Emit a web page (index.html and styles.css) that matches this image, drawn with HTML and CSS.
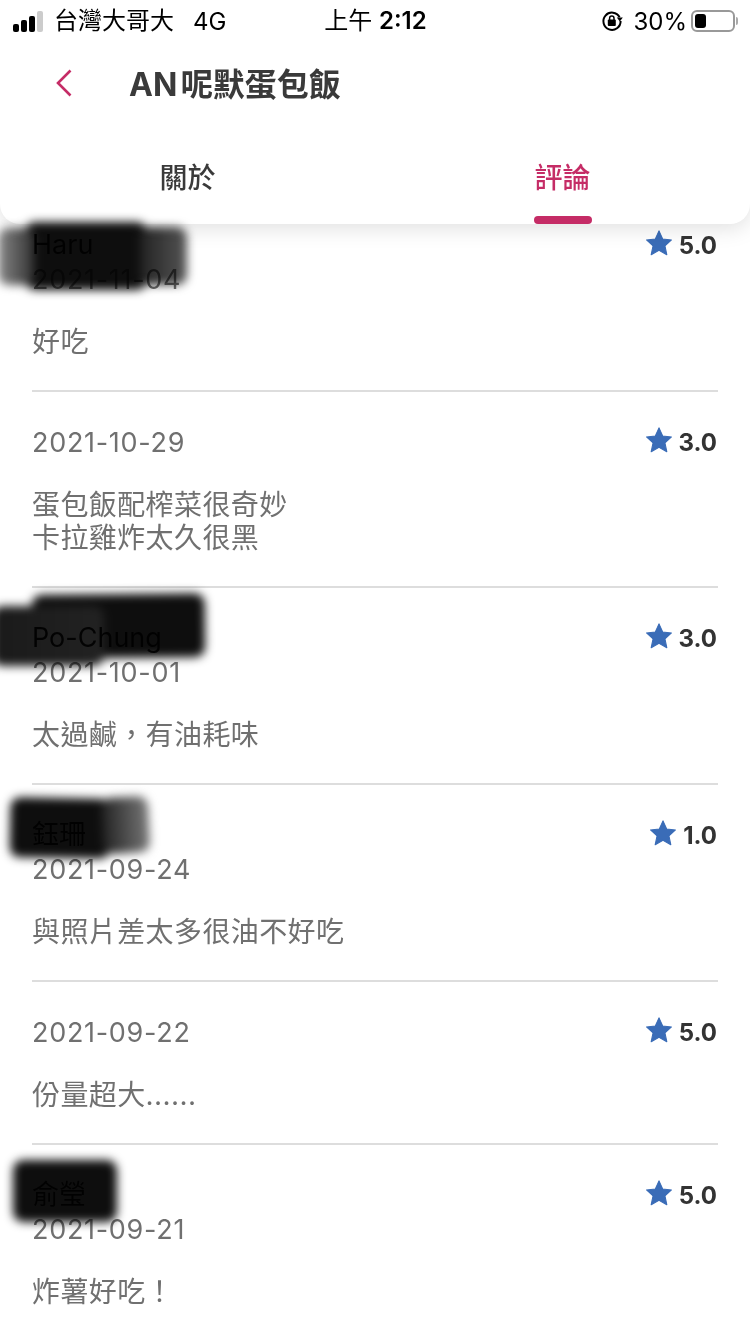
FILE: index.html
```html
<!DOCTYPE html>
<html lang="zh-Hant">

<head>
  <meta charset="UTF-8">
  <meta name="viewport" content="width=device-width, initial-scale=1.0">
  <title>AN 呢默蛋包飯</title>
  <link rel="stylesheet" href="styles.css">
</head>

<body>
  <header class="top">
    <div class="status">
      <div class="status-left">
        <span class="signal"><i></i><i></i><i></i><i class="off"></i></span>
        <span class="carrier">台灣大哥大</span>
        <span class="net">4G</span>
      </div>
      <div class="clock">上午 <b>2:12</b></div>
      <div class="status-right">
        <svg class="lock" width="22" height="22" viewBox="0 0 22 22">
          <path d="M18.6 7.2A8.6 8.6 0 1 0 19.6 11" fill="none" stroke="#000" stroke-width="2"/>
          <path d="M15.8 7.6h6l-3 4z" fill="#000"/>
          <rect x="6.8" y="9.6" width="8" height="6.4" rx="1" fill="#000"/>
          <path d="M8.6 10V8.2a2.2 2.2 0 0 1 4.4 0V10" fill="none" stroke="#000" stroke-width="1.5"/>
        </svg>
        <span class="pct">30%</span>
        <span class="battery"><i></i></span>
        <span class="battery-cap"></span>
      </div>
    </div>
    <div class="title-row">
      <svg class="back" width="16" height="28" viewBox="0 0 16 28">
        <path d="M14.5 1.5 2 14l12.5 12.5" fill="none" stroke="#c52c66" stroke-width="2.6"/>
      </svg>
      <h1>AN 呢默蛋包飯</h1>
    </div>
    <nav class="tabs">
      <div class="tab">關於</div>
      <div class="tab active">評論</div>
    </nav>
  </header>

  <main class="list">
    <section class="item">
      <div class="scribble s1"><i></i><i></i><i></i></div>
      <div class="info">
        <div class="name">Haru</div>
        <div class="date">2021-11-04</div>
      </div>
      <div class="rating">
        <svg class="star" width="26" height="26" viewBox="0 0 24 24"><use href="#star"/></svg>5.0
      </div>
      <p class="text">好吃</p>
    </section>
    <section class="item">
      <div class="info">
        <div class="date">2021-10-29</div>
      </div>
      <div class="rating">
        <svg class="star" width="26" height="26" viewBox="0 0 24 24"><use href="#star"/></svg>3.0
      </div>
      <p class="text">蛋包飯配榨菜很奇妙<br>卡拉雞炸太久很黑</p>
    </section>
    <section class="item">
      <div class="scribble s2"><i></i><i></i></div>
      <div class="info">
        <div class="name">Po-Chung</div>
        <div class="date">2021-10-01</div>
      </div>
      <div class="rating">
        <svg class="star" width="26" height="26" viewBox="0 0 24 24"><use href="#star"/></svg>3.0
      </div>
      <p class="text">太過鹹，有油耗味</p>
    </section>
    <section class="item">
      <div class="scribble s3"><i></i><i></i></div>
      <div class="info">
        <div class="name">鈺珊</div>
        <div class="date">2021-09-24</div>
      </div>
      <div class="rating">
        <svg class="star" width="26" height="26" viewBox="0 0 24 24"><use href="#star"/></svg>1.0
      </div>
      <p class="text">與照片差太多很油不好吃</p>
    </section>
    <section class="item">
      <div class="info">
        <div class="date">2021-09-22</div>
      </div>
      <div class="rating">
        <svg class="star" width="26" height="26" viewBox="0 0 24 24"><use href="#star"/></svg>5.0
      </div>
      <p class="text">份量超大......</p>
    </section>
    <section class="item">
      <div class="scribble s4"><i></i></div>
      <div class="info">
        <div class="name">俞瑩</div>
        <div class="date">2021-09-21</div>
      </div>
      <div class="rating">
        <svg class="star" width="26" height="26" viewBox="0 0 24 24"><use href="#star"/></svg>5.0
      </div>
      <p class="text">炸薯好吃！</p>
    </section>
  </main>

  <svg width="0" height="0" class="defs">
    <symbol id="star" viewBox="0 0 24 24">
      <path d="M12 .8l3.4 7.5 8.1.9-6 5.5 1.700 8.100L12 18.700l-7.200 4.100 1.700-8.100-6-5.500 8.100-.9z" fill="#3a6cb7" stroke="#3a6cb7" stroke-linejoin="round"/>
    </symbol>
  </svg>
</body>

</html>
```

FILE: styles.css
```css
* {
  padding: 0;
  margin: 0;
  box-sizing: border-box;
}

html,
body {
  height: 1334px;
  overflow: hidden;
  background: #fff;
}

body {
  font-family: Inter, "Noto Sans CJK TC", sans-serif;
  color: #333;
}

.defs {
  position: absolute;
}

/* header */
.top {
  position: relative;
  z-index: 2;
  height: 224px;
  background: #fff;
  border-radius: 0 0 20px 20px;
  box-shadow: 0 4px 22px rgba(0, 0, 0, .13);
}

.status {
  height: 42px;
  display: flex;
  align-items: center;
  justify-content: space-between;
  padding: 0 12px 0 13px;
  color: #000;
  font-size: 24px;
}

.status-left,
.status-right {
  width: 300px;
  display: flex;
  align-items: center;
}

.status-right {
  justify-content: flex-end;
}

.signal {
  display: flex;
  align-items: flex-end;
  gap: 2px;
  height: 21px;
  margin-right: 11px;
}

.signal i {
  width: 6px;
  height: 8px;
  background: #000;
  border-radius: 2px;
}

.signal i:nth-child(2) {
  height: 12px;
}

.signal i:nth-child(3) {
  height: 16px;
}

.signal i:nth-child(4) {
  height: 21px;
}

.signal .off {
  background: #ccc;
}

.carrier {
  margin-top: -6px;
}

.net {
  margin-left: 19px;
  font-size: 24px;
}

.clock {
  margin-top: -6px;
}

.clock b {
  font-weight: 600;
}

.lock {
  margin-right: 10px;
}

.pct {
  margin-right: 4px;
}

.battery {
  display: block;
  width: 44px;
  height: 22px;
  border: 2px solid #999;
  border-radius: 6px;
  padding: 2px;
}

.battery i {
  display: block;
  width: 11px;
  height: 14px;
  background: #000;
  border-radius: 3px;
}

.battery-cap {
  width: 2px;
  height: 8px;
  background: #aaa;
  margin-left: 1px;
  border-radius: 0 2px 2px 0;
}

.title-row {
  height: 82px;
  display: flex;
  align-items: center;
  padding: 0 0 2px 56px;
}

.back {
  margin-right: 57px;
  margin-top: 2px;
}

h1 {
  font-size: 32px;
  font-weight: 700;
  color: #3a3a3a;
  word-spacing: -4px;
}

.tabs {
  display: flex;
  height: 100px;
}

.tab {
  position: relative;
  flex: 1;
  padding-top: 33px;
  text-align: center;
  font-size: 28px;
  line-height: 42px;
  font-weight: 500;
  color: #3a3a3a;
}

.tab.active {
  color: #c52c66;
}

.tab.active::after {
  content: "";
  position: absolute;
  left: 50%;
  bottom: 0;
  width: 58px;
  height: 8px;
  margin-left: -29px;
  background: #c52c66;
  border-radius: 4px;
}

/* reviews */
.list {
  margin-top: -29px;
  padding: 0 32px;
}

.item {
  position: relative;
  display: flex;
  flex-wrap: wrap;
  justify-content: space-between;
  padding: 33px 0 31px;
  border-bottom: 2px solid #ddd;
}

.info {
  line-height: 35px;
}

.name {
  font-size: 27px;
  line-height: 34px;
  color: #111;
}

.date {
  font-size: 27px;
  color: #707070;
  letter-spacing: .7px;
}

.rating {
  display: flex;
  align-items: center;
  gap: 7px;
  height: 36px;
  margin: -1px 1px 0 0;
  font-size: 24px;
  font-weight: 700;
  color: #333;
}

.star {
  margin-top: -5px;
}

.text {
  width: 100%;
  margin-top: 29px;
  font-size: 28px;
  line-height: 33px;
  letter-spacing: .4px;
  color: #707070;
}

/* blurred marks over the names */
.scribble {
  position: absolute;
  z-index: 3;
  top: 0;
  left: 0;
  filter: blur(5px);
  mix-blend-mode: multiply;
}

.scribble i {
  position: absolute;
  display: block;
  background: #0e0e0e;
  border-radius: 10px;
}

.s1 i:nth-child(1) {
  left: -7px;
  top: 27px;
  width: 122px;
  height: 68px;
}

.s1 i:nth-child(2) {
  left: 108px;
  top: 32px;
  width: 47px;
  height: 58px;
  background: linear-gradient(90deg, #222, #555);
}

.s1 i:nth-child(3) {
  left: -34px;
  top: 33px;
  width: 36px;
  height: 57px;
  background: linear-gradient(90deg, #888, #333);
}

.s2 i:nth-child(1) {
  left: 0;
  top: 6px;
  width: 173px;
  height: 64px;
  transform: rotate(-.5deg);
}

.s2 i:nth-child(2) {
  left: -40px;
  top: 18px;
  width: 112px;
  height: 60px;
  background: linear-gradient(90deg, #1a1a1a, #222);
}

.s3 i:nth-child(1) {
  left: -22px;
  top: 13px;
  width: 100px;
  height: 60px;
  transform: rotate(1deg);
}

.s3 i:nth-child(2) {
  left: 70px;
  top: 12px;
  width: 47px;
  height: 56px;
  background: linear-gradient(90deg, #222, #777);
  transform: rotate(-3deg);
}

.s4 i:nth-child(1) {
  left: -19px;
  top: 15px;
  width: 104px;
  height: 62px;
}
```
